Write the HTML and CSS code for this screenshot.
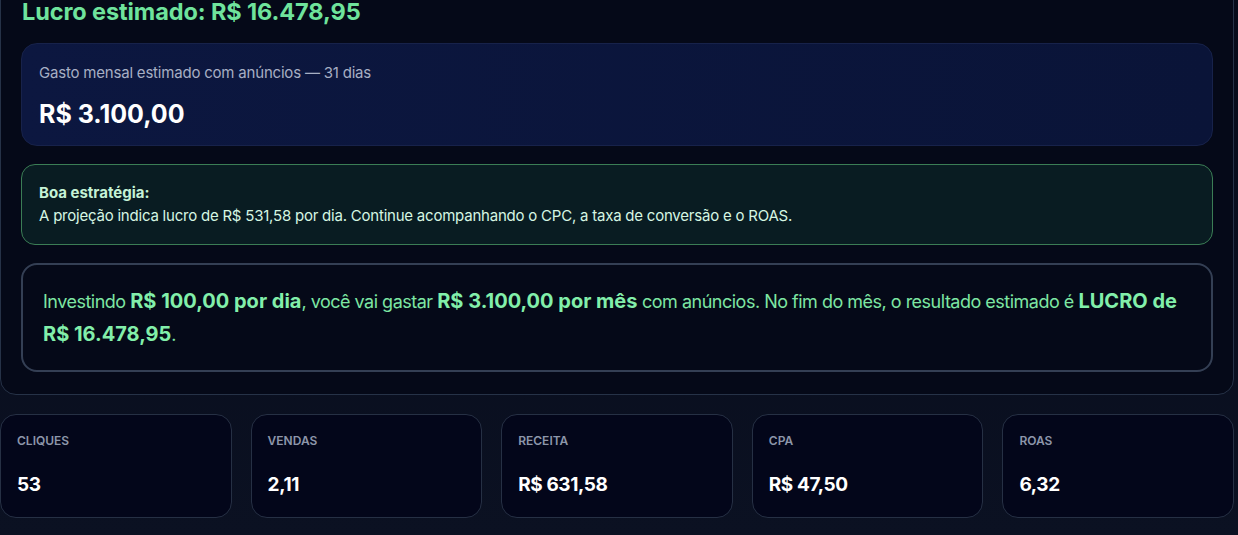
FILE: index.html
```html
<!DOCTYPE html>
<html lang="pt-BR">
<head>
<meta charset="utf-8">
<link rel="stylesheet" href="styles.css">
</head>
<body>
<main class="page">
  <section class="panel">
    <h2 class="profit-title">Lucro estimado: R$ 16.478,95</h2>
    <div class="spend-card">
      <div class="spend-label">Gasto mensal estimado com anúncios — 31 dias</div>
      <div class="spend-value">R$ 3.100,00</div>
    </div>
    <div class="tip-card">
      <div class="tip-title">Boa estratégia:</div>
      <div class="tip-text">A projeção indica lucro de R$ 531,58 por dia. Continue acompanhando o CPC, a taxa de conversão e o ROAS.</div>
    </div>
    <div class="summary-card">
      <p class="summary-text">Investindo <strong>R$ 100,00 por dia</strong>, você vai gastar <strong>R$ 3.100,00 por mês</strong> com anúncios. No fim do mês, o resultado estimado é <strong>LUCRO de R$ 16.478,95</strong>.</p>
    </div>
  </section>
  <section class="stats">
    <div class="stat"><div class="stat-label">CLIQUES</div><div class="stat-value">53</div></div>
    <div class="stat"><div class="stat-label">VENDAS</div><div class="stat-value">2,11</div></div>
    <div class="stat"><div class="stat-label">RECEITA</div><div class="stat-value">R$ 631,58</div></div>
    <div class="stat"><div class="stat-label">CPA</div><div class="stat-value">R$ 47,50</div></div>
    <div class="stat"><div class="stat-label">ROAS</div><div class="stat-value">6,32</div></div>
  </section>
</main>
</body>
</html>
```

FILE: styles.css
```css
* { box-sizing: border-box; }
html, body { margin: 0; padding: 0; }
body {
  background: linear-gradient(180deg, #070b1a 0%, #0b1122 100%);
  min-height: 535px;
  font-family: Inter, "Noto Sans", sans-serif;
  color: #e6ebf5;
  overflow: hidden;
}
.page {
  width: 1234px;
}
.panel {
  margin-top: -22px;
  background: #050918;
  border: 1px solid #263247;
  border-radius: 16px;
  padding: 21px 20px 22px 20px;
  display: flex;
  flex-direction: column;
  gap: 18px;
}
.profit-title {
  margin: 0 0 1px 1px;
  font-size: 23.5px;
  line-height: 24px;
  font-weight: 700;
  color: #6fe39c;
  letter-spacing: -0.1px;
}
.spend-card {
  background: linear-gradient(90deg, #0c1740 0%, #0a1438 100%);
  border: 1px solid #17224a;
  border-radius: 16px;
  padding: 19px 17px 17px;
  height: 103px;
}
.spend-label {
  font-size: 15px;
  line-height: 20px;
  color: #a7afc4;
  letter-spacing: -0.2px;
}
.spend-value {
  margin-top: 16px;
  font-size: 25px;
  line-height: 30px;
  font-weight: 700;
  color: #ffffff;
}
.tip-card {
  background: #091c22;
  border: 1px solid #3b7d55;
  border-radius: 14px;
  padding: 16px 17px 0;
  height: 81px;
}
.tip-title {
  font-size: 15px;
  line-height: 23px;
  font-weight: 700;
  color: #c5f3d6;
}
.tip-text {
  font-size: 15px;
  line-height: 23px;
  color: #d6f6e2;
  letter-spacing: -0.22px;
}
.summary-card {
  border: 2px solid #343f54;
  border-radius: 16px;
  padding: 20px 20px 18px;
  height: 109px;
}
.summary-text {
  margin: 0;
  font-size: 18px;
  line-height: 33px;
  color: #7de6a3;
  letter-spacing: -0.5px;
}
.summary-text strong {
  font-size: 20px;
  line-height: 1;
  font-weight: 700;
  color: #82efaa;
  letter-spacing: 0;
}
.stats {
  margin-top: 19px;
  display: grid;
  grid-template-columns: repeat(5, 1fr);
  gap: 19px;
}
.stat {
  background: #03061a;
  border: 1px solid #263044;
  border-radius: 16px;
  height: 104px;
  padding: 19px 16px 0;
}
.stat-label {
  font-size: 12px;
  line-height: 14px;
  font-weight: 600;
  color: #8d96aa;
}
.stat-value {
  margin-top: 25px;
  font-size: 19px;
  line-height: 24px;
  font-weight: 700;
  color: #ffffff;
  letter-spacing: -0.4px;
}
```
